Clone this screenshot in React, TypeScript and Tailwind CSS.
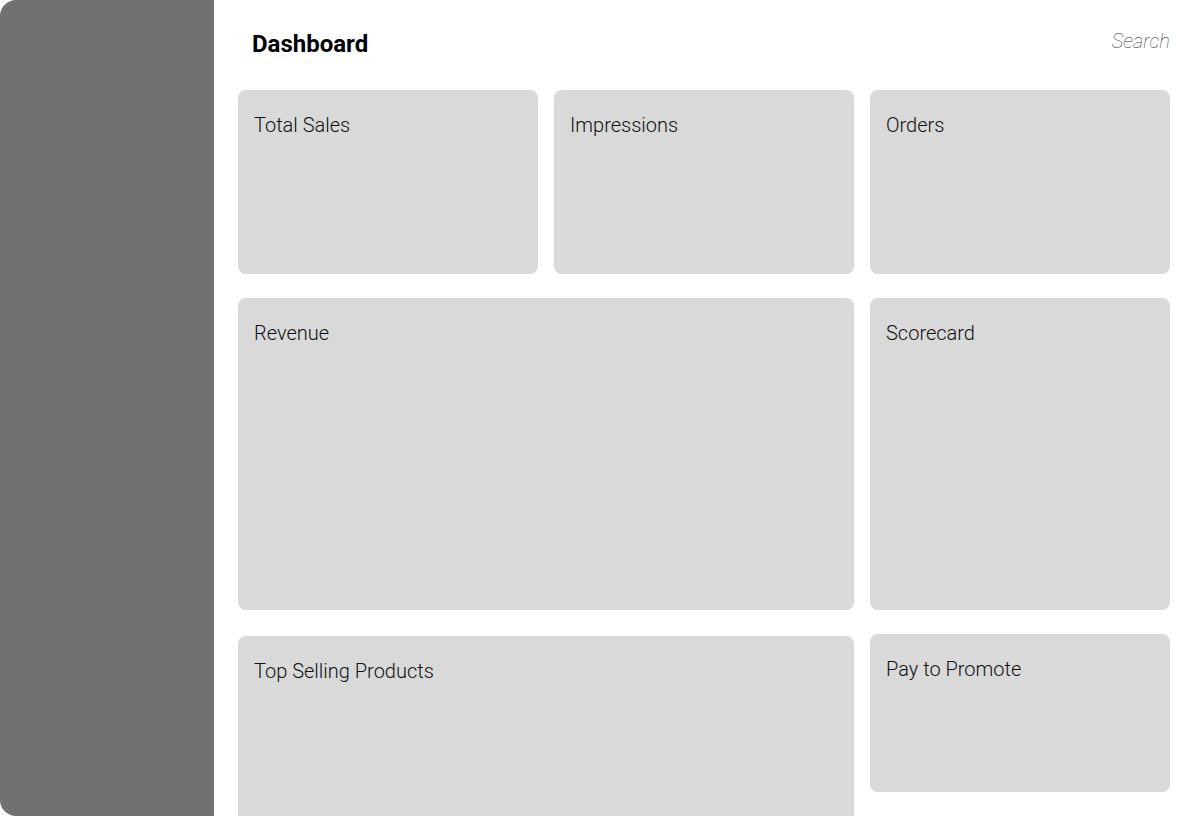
import React from "react";

function Card({ title, className }: { title: string; className: string }) {
  return (
    <div className={`bg-[#d9d9d9] rounded-lg px-4 pt-[23px] ${className}`}>
      <div className="text-[20px] leading-[24px] font-light text-[#111]">{title}</div>
    </div>
  );
}

export default function App() {
  return (
    <div
      className="flex w-[1194px] h-[816px] overflow-hidden bg-white"
      style={{ fontFamily: "Roboto, 'Noto Sans', sans-serif" }}
    >
      <aside className="w-[214px] shrink-0 h-full bg-[#717171] rounded-l-2xl" />
      <main className="flex-1 px-6">
        <header className="h-[90px] flex items-start justify-between pt-[29px]">
          <h1 className="pl-[14px] mt-[1px] text-[24px] leading-[28px] font-bold text-black">Dashboard</h1>
          <div className="text-[20px] leading-[24px] font-thin italic text-[#333]">Search</div>
        </header>
        <div className="grid grid-cols-3 gap-4">
          <Card title="Total Sales" className="h-[184px]" />
          <Card title="Impressions" className="h-[184px]" />
          <Card title="Orders" className="h-[184px]" />
        </div>
        <div className="grid grid-cols-3 gap-4 mt-6">
          <Card title="Revenue" className="col-span-2 h-[312px]" />
          <Card title="Scorecard" className="h-[312px]" />
        </div>
        <div className="grid grid-cols-3 gap-4 mt-6 items-start">
          <Card title="Top Selling Products" className="col-span-2 h-[240px] mt-[2px]" />
          <Card title="Pay to Promote" className="h-[158px]" />
        </div>
      </main>
    </div>
  );
}
